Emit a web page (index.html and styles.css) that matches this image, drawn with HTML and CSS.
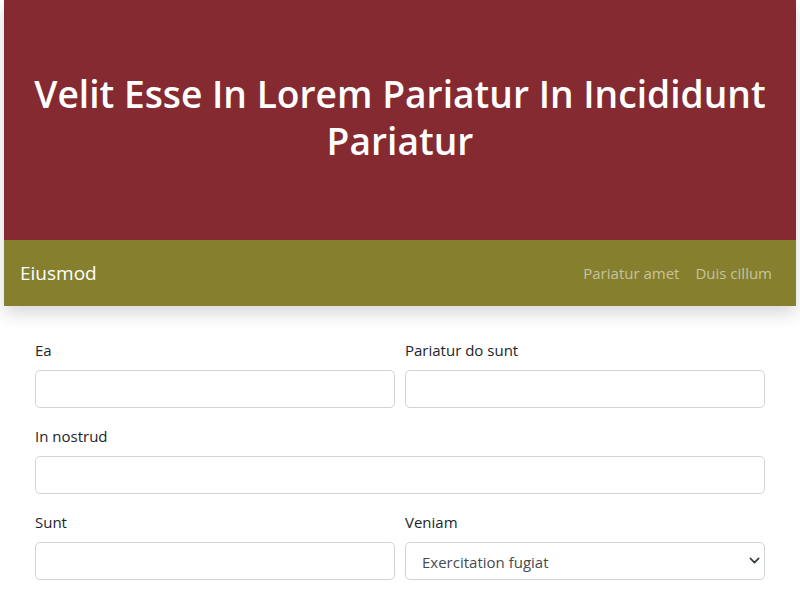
FILE: index.html
```html
<!DOCTYPE html>
<html lang="en">
<head>
<meta charset="utf-8">
<title>Eiusmod</title>
<link rel="stylesheet" href="styles.css">
</head>
<body>
<div class="top">
  <header class="hero">
    <h1>Velit Esse In Lorem Pariatur In Incididunt Pariatur</h1>
  </header>
  <nav class="navbar">
    <a class="brand" href="#">Eiusmod</a>
    <div class="links">
      <a href="#">Pariatur amet</a>
      <a href="#">Duis cillum</a>
    </div>
  </nav>
</div>
<main class="content">
  <form class="form">
    <div class="field">
      <label for="ea">Ea</label>
      <input id="ea" type="text">
    </div>
    <div class="field">
      <label for="pds">Pariatur do sunt</label>
      <input id="pds" type="text">
    </div>
    <div class="field wide">
      <label for="inn">In nostrud</label>
      <input id="inn" type="text">
    </div>
    <div class="field">
      <label for="sunt">Sunt</label>
      <input id="sunt" type="text">
    </div>
    <div class="field">
      <label for="ven">Veniam</label>
      <div class="select-wrap">
        <select id="ven">
          <option>Exercitation fugiat</option>
        </select>
        <svg class="chev" width="16" height="16" viewBox="0 0 16 16"><path d="M2 5l6 6 6-6" fill="none" stroke="#343a40" stroke-width="2.4" stroke-linecap="round" stroke-linejoin="round"/></svg>
      </div>
    </div>
  </form>
</main>
</body>
</html>
```
FILE: styles.css
```css
* { box-sizing: border-box; }
body {
  margin: 0;
  background: #fff;
  font-family: "Open Sans", "Noto Sans", sans-serif;
  color: #212529;
}
.top {
  margin: 0 4px;
  box-shadow: 0 8px 16px rgba(0,0,0,0.15);
}
.hero {
  background: #852a30;
  height: 240px;
  display: flex;
  align-items: center;
  justify-content: center;
  padding: 0 20px 6px;
}
.hero h1 {
  margin: 0;
  color: #fff;
  font-weight: 600;
  font-size: 37.2px;
  line-height: 47px;
  text-align: center;
  letter-spacing: 0;
}
.navbar {
  background: #857f2e;
  height: 66px;
  display: flex;
  align-items: center;
  justify-content: space-between;
  padding: 0 16px;
}
.brand {
  color: #fff;
  text-decoration: none;
  font-size: 19px;
}
.links { display: flex; }
.links a {
  color: rgba(255,255,255,0.55);
  text-decoration: none;
  font-size: 15px;
  padding: 8px;
}
.content {
  padding: 32px 35px 0;
}
.form {
  display: grid;
  grid-template-columns: 1fr 1fr;
  column-gap: 10px;
  row-gap: 16px;
}
.field { display: flex; flex-direction: column; }
.field.wide { grid-column: 1 / 3; }
label {
  font-size: 15px;
  line-height: 24px;
  margin-bottom: 8px;
}
input, select {
  height: 38px;
  width: 100%;
  border: 1px solid #ced4da;
  border-radius: 5px;
  background: #fff;
  font-family: inherit;
  font-size: 15px;
  color: #212529;
  padding: 0 16px;
}
.select-wrap { position: relative; }
select {
  appearance: none;
  -webkit-appearance: none;
  color: #464b50;
  padding-top: 1px;
}
.chev {
  position: absolute;
  right: 5px;
  top: 13px;
  width: 11px;
  height: 11px;
  pointer-events: none;
}
```
